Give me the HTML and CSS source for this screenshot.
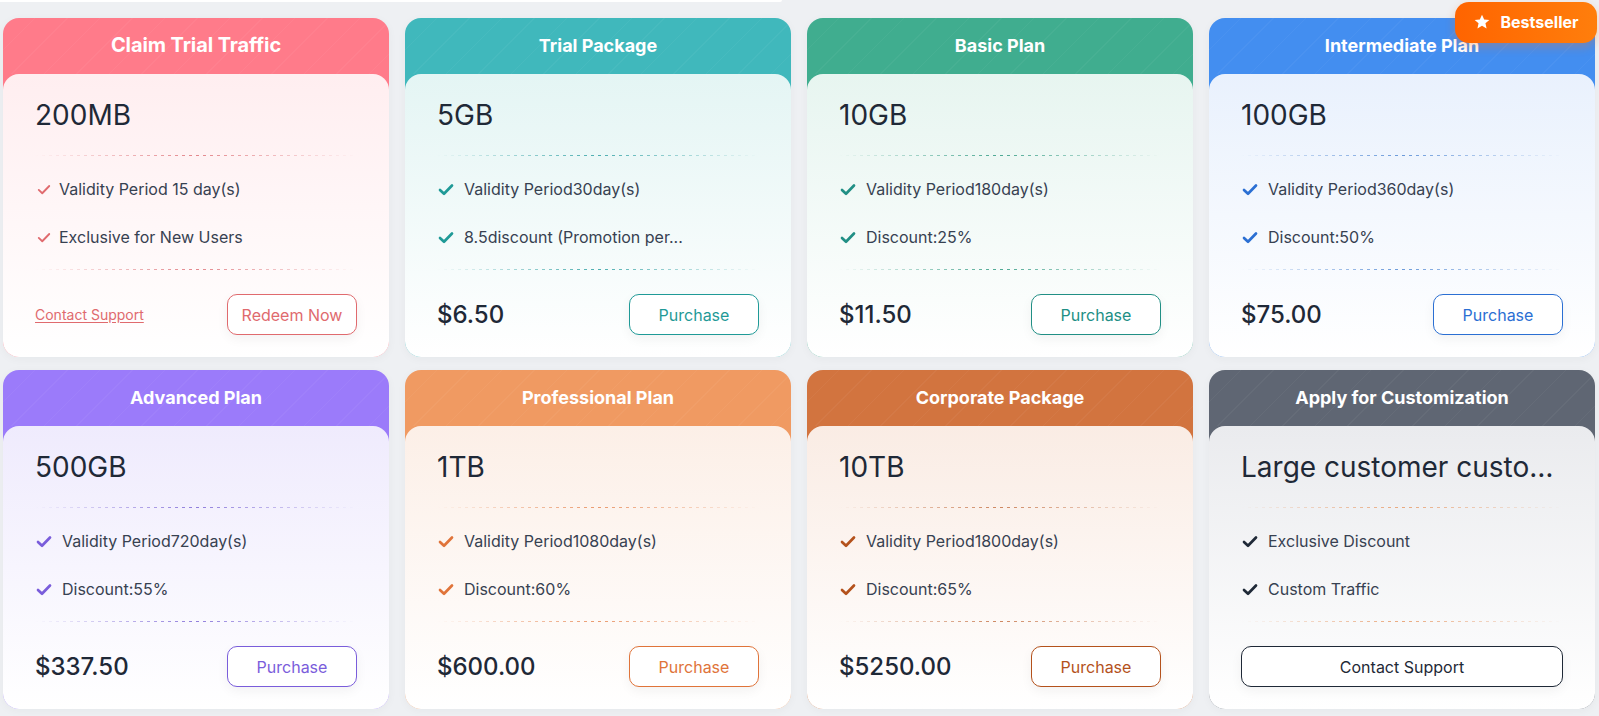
FILE: index.html
```html
<!DOCTYPE html>
<html lang="en">
<head>
<meta charset="utf-8">
<title>Plans</title>
<link rel="stylesheet" href="styles.css">
</head>
<body>
<div class="topbar"></div>
<main class="grid">
  <section class="card c-red">
    <header class="card-head big">Claim Trial Traffic</header>
    <div class="card-body">
      <div class="amount">200MB</div>
      <div class="divider"></div>
      <ul class="features">
        <li><svg class="check thin" viewBox="0 0 16 12"><path d="M2 6.5l4 3.8L14 2"/></svg>Validity Period 15 day(s)</li>
        <li><svg class="check thin" viewBox="0 0 16 12"><path d="M2 6.5l4 3.8L14 2"/></svg>Exclusive for New Users</li>
      </ul>
      <div class="divider"></div>
      <div class="foot">
        <a class="link" href="#">Contact Support</a>
        <button class="btn">Redeem Now</button>
      </div>
    </div>
  </section>

  <section class="card c-teal">
    <header class="card-head">Trial Package</header>
    <div class="card-body">
      <div class="amount">5GB</div>
      <div class="divider"></div>
      <ul class="features">
        <li><svg class="check" viewBox="0 0 16 12"><path d="M2 6.5l4 3.8L14 2"/></svg>Validity Period30day(s)</li>
        <li><svg class="check" viewBox="0 0 16 12"><path d="M2 6.5l4 3.8L14 2"/></svg>8.5discount (Promotion per...</li>
      </ul>
      <div class="divider"></div>
      <div class="foot">
        <span class="price">$6.50</span>
        <button class="btn">Purchase</button>
      </div>
    </div>
  </section>

  <section class="card c-green">
    <header class="card-head">Basic Plan</header>
    <div class="card-body">
      <div class="amount">10GB</div>
      <div class="divider"></div>
      <ul class="features">
        <li><svg class="check" viewBox="0 0 16 12"><path d="M2 6.5l4 3.8L14 2"/></svg>Validity Period180day(s)</li>
        <li><svg class="check" viewBox="0 0 16 12"><path d="M2 6.5l4 3.8L14 2"/></svg>Discount:25%</li>
      </ul>
      <div class="divider"></div>
      <div class="foot">
        <span class="price">$11.50</span>
        <button class="btn">Purchase</button>
      </div>
    </div>
  </section>

  <section class="card c-blue">
    <header class="card-head">Intermediate Plan</header>
    <span class="badge"><svg class="star" viewBox="0 0 24 24"><path d="M12 2.2l2.9 6.3 6.9.7-5.2 4.6 1.5 6.8L12 17.1l-6.1 3.5 1.5-6.8-5.2-4.6 6.9-.7z"/></svg>Bestseller</span>
    <div class="card-body">
      <div class="amount">100GB</div>
      <div class="divider"></div>
      <ul class="features">
        <li><svg class="check" viewBox="0 0 16 12"><path d="M2 6.5l4 3.8L14 2"/></svg>Validity Period360day(s)</li>
        <li><svg class="check" viewBox="0 0 16 12"><path d="M2 6.5l4 3.8L14 2"/></svg>Discount:50%</li>
      </ul>
      <div class="divider"></div>
      <div class="foot">
        <span class="price">$75.00</span>
        <button class="btn">Purchase</button>
      </div>
    </div>
  </section>

  <section class="card c-purple">
    <header class="card-head">Advanced Plan</header>
    <div class="card-body">
      <div class="amount">500GB</div>
      <div class="divider"></div>
      <ul class="features">
        <li><svg class="check" viewBox="0 0 16 12"><path d="M2 6.5l4 3.8L14 2"/></svg>Validity Period720day(s)</li>
        <li><svg class="check" viewBox="0 0 16 12"><path d="M2 6.5l4 3.8L14 2"/></svg>Discount:55%</li>
      </ul>
      <div class="divider"></div>
      <div class="foot">
        <span class="price">$337.50</span>
        <button class="btn">Purchase</button>
      </div>
    </div>
  </section>

  <section class="card c-orange">
    <header class="card-head">Professional Plan</header>
    <div class="card-body">
      <div class="amount">1TB</div>
      <div class="divider"></div>
      <ul class="features">
        <li><svg class="check" viewBox="0 0 16 12"><path d="M2 6.5l4 3.8L14 2"/></svg>Validity Period1080day(s)</li>
        <li><svg class="check" viewBox="0 0 16 12"><path d="M2 6.5l4 3.8L14 2"/></svg>Discount:60%</li>
      </ul>
      <div class="divider"></div>
      <div class="foot">
        <span class="price">$600.00</span>
        <button class="btn">Purchase</button>
      </div>
    </div>
  </section>

  <section class="card c-rust">
    <header class="card-head">Corporate Package</header>
    <div class="card-body">
      <div class="amount">10TB</div>
      <div class="divider"></div>
      <ul class="features">
        <li><svg class="check" viewBox="0 0 16 12"><path d="M2 6.5l4 3.8L14 2"/></svg>Validity Period1800day(s)</li>
        <li><svg class="check" viewBox="0 0 16 12"><path d="M2 6.5l4 3.8L14 2"/></svg>Discount:65%</li>
      </ul>
      <div class="divider"></div>
      <div class="foot">
        <span class="price">$5250.00</span>
        <button class="btn">Purchase</button>
      </div>
    </div>
  </section>

  <section class="card c-gray">
    <header class="card-head">Apply for Customization</header>
    <div class="card-body">
      <div class="amount ellip">Large customer customization</div>
      <div class="divider"></div>
      <ul class="features">
        <li><svg class="check" viewBox="0 0 16 12"><path d="M2 6.5l4 3.8L14 2"/></svg>Exclusive Discount</li>
        <li><svg class="check" viewBox="0 0 16 12"><path d="M2 6.5l4 3.8L14 2"/></svg>Custom Traffic</li>
      </ul>
      <div class="divider"></div>
      <div class="foot">
        <button class="btn wide">Contact Support</button>
      </div>
    </div>
  </section>
</main>
</body>
</html>
```
FILE: styles.css
```css
* { box-sizing: border-box; }
html, body { margin: 0; padding: 0; }
body {
  background: #eef0f3;
  font-family: Inter, "Noto Sans", "Liberation Sans", sans-serif;
  color: #1f2937;
  width: 1599px;
  height: 716px;
  overflow: hidden;
}
.topbar {
  width: 782px;
  height: 2px;
  background: #fff;
  border-radius: 0 0 8px 0;
}
.grid {
  display: grid;
  grid-template-columns: repeat(4, 386px);
  column-gap: 16px;
  row-gap: 13px;
  padding: 16px 0 0 3px;
}
.card {
  --head: #ff7d8b;
  --accent: #e06a6f;
  --tint: #fff0f1;
  --line: #e88080;
  position: relative;
  height: 339px;
  border-radius: 16px;
  background-color: var(--head);
  display: flex;
  flex-direction: column;
  box-shadow: 0 2px 10px rgba(30, 40, 60, 0.04);
}
.card-head {
  height: 56px;
  flex: none;
  display: flex;
  align-items: center;
  justify-content: center;
  padding-bottom: 2px;
  color: #fff;
  font-weight: 700;
  font-size: 18px;
  border-radius: 16px 16px 0 0;
  background-image: repeating-linear-gradient(135deg, rgba(255,255,255,0) 0 22px, rgba(255,255,255,0.04) 22px 23px);
}
.card-head.big {
  font-size: 20px;
  letter-spacing: -0.1px;
}
.card-body {
  flex: 1;
  border-radius: 16px;
  background: linear-gradient(180deg, var(--tint) 0%, #fff 100%);
  padding: 19px 32px 0 32px;
  display: flex;
  flex-direction: column;
}
.amount {
  font-size: 28px;
  line-height: 44px;
  height: 44px;
  font-weight: 400;
  color: #1f2937;
}
.amount.ellip {
  white-space: nowrap;
  overflow: hidden;
  text-overflow: ellipsis;
}
.divider {
  height: 1px;
  margin: 18px 0 0 0;
  background: repeating-linear-gradient(90deg, var(--line) 0 3px, transparent 3px 7px);
  -webkit-mask-image: linear-gradient(90deg, transparent 0%, rgba(0,0,0,.9) 50%, transparent 100%);
  mask-image: linear-gradient(90deg, transparent 0%, rgba(0,0,0,.9) 50%, transparent 100%);
}
.features {
  list-style: none;
  margin: 0;
  padding: 9px 0 0 0;
}
.features li {
  display: flex;
  align-items: center;
  height: 48px;
  font-size: 16px;
  color: #374151;
}
.features + .divider { margin-top: 8px; }
.check {
  width: 16px;
  height: 13px;
  margin: 0 10px 0 1px;
  fill: none;
  stroke: var(--accent);
  stroke-width: 2.7;
  stroke-linecap: round;
  stroke-linejoin: round;
  flex: none;
}
.check.thin { width: 14px; height: 11px; stroke-width: 2.1; margin: 0 8px 0 2px; }
.foot {
  margin-top: 24px;
  display: flex;
  align-items: center;
  justify-content: space-between;
  height: 41px;
}
.price {
  font-size: 24px;
  font-weight: 500;
  color: #1f2937;
}
.link {
  color: var(--accent);
  font-size: 14px;
  text-decoration: underline;
  text-underline-offset: 2px;
}
.btn {
  width: 130px;
  height: 41px;
  border: 1px solid var(--accent);
  border-radius: 10px;
  background: #fff;
  color: var(--accent);
  font-family: inherit;
  font-size: 16px;
  box-shadow: 0 4px 12px rgba(0,0,0,0.05);
  padding: 0;
}
.btn.wide {
  width: 100%;
  color: #1f2937;
}
.badge {
  position: absolute;
  top: -16px;
  right: -2px;
  width: 142px;
  height: 41px;
  border-radius: 14px;
  background: linear-gradient(90deg, #ff6400 0%, #ff7e0c 100%);
  color: #fff;
  font-size: 16px;
  font-weight: 700;
  display: flex;
  align-items: center;
  justify-content: center;
  gap: 9px;
  padding-bottom: 1px;
  box-shadow: 0 4px 10px rgba(255, 110, 20, 0.3);
}
.star { width: 18px; height: 18px; fill: #fff; }

.c-red    { --head: #ff7b8a; --accent: #e06a6e; --tint: #ffeef0; --line: #e07a80; }
.c-teal   { --head: #40b8bc; --accent: #1f9a97; --tint: #e4f5f4; --line: #3aa5a8; }
.c-green  { --head: #40ad8f; --accent: #218f85; --tint: #e7f5f0; --line: #3a9f88; }
.c-blue   { --head: #438ef0; --accent: #2b6fd3; --tint: #e9f1fd; --line: #5b8fd6; }
.c-purple { --head: #9b7bfa; --accent: #7a5ddb; --tint: #efebfd; --line: #8470d8; }
.c-orange { --head: #f09a62; --accent: #e0743a; --tint: #fcefe7; --line: #e89060; }
.c-rust   { --head: #d2743f; --accent: #b4521c; --tint: #faece4; --line: #c87a50; }
.c-gray   { --head: #5f6673; --accent: #1f2937; --tint: #eaebee; --line: #e8a070; }
```
